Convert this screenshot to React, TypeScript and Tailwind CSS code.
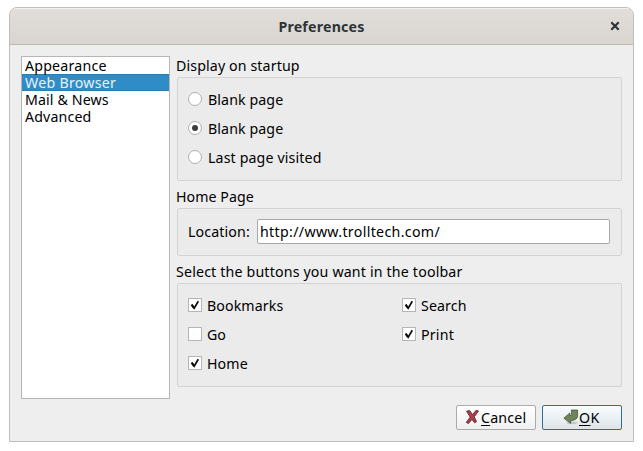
import type { ReactNode } from "react";

function Radio({ label, tracking, checked }: { label: string; tracking: string; checked?: boolean }) {
  return (
    <label className="flex h-[14px] items-center gap-[6px]">
      <span className="flex size-[14px] shrink-0 items-center justify-center rounded-full border border-[#b0b0b0] bg-white">
        {checked && <span className="size-[6px] rounded-full bg-[#3c3c3c]" />}
      </span>
      <span className={`whitespace-nowrap pt-[2px] ${tracking}`}>{label}</span>
    </label>
  );
}

function Check({ label, tracking, checked }: { label: string; tracking: string; checked?: boolean }) {
  return (
    <label className="flex h-[14px] items-center gap-[5px]">
      <span className="size-[14px] shrink-0 border border-[#b6b6b6] bg-white">
        {checked && (
          <svg viewBox="0 0 12 12" className="size-3" fill="none" stroke="#0a0a0a">
            <path d="M2.7 5.8 5.2 9.2 9.3 2.3" strokeWidth="1.7" />
            <path d="M2.6 5.7 5 9" strokeWidth="2.1" />
          </svg>
        )}
      </span>
      <span className={`whitespace-nowrap pt-[2px] ${tracking}`}>{label}</span>
    </label>
  );
}

function Group({ title, tracking, className, children }: { title: string; tracking: string; className: string; children: ReactNode }) {
  return (
    <section>
      <h2 className={`-ml-px h-[21px] whitespace-nowrap leading-[19px] ${tracking}`}>{title}</h2>
      <div className={`rounded-[2px] border border-[#d3d3d3] bg-[#ebebeb] ${className}`}>{children}</div>
    </section>
  );
}

export default function App() {
  return (
    <div className="h-[451px] w-[643px] bg-white pl-[9px] pt-[7px] font-['Noto_Sans',sans-serif] text-[14.2px] text-black">
      <div className="flex h-[435px] w-[625px] flex-col overflow-hidden rounded-t-[8px] border border-[#bdbdbd] bg-[#eeeeee]">
        <header className="grid h-[37px] shrink-0 grid-cols-[1fr_auto_1fr] items-center border-b border-[#bdb9ae] bg-linear-to-b from-[#e1dedb] to-[#d9d6d0] text-[#2e3436] shadow-[inset_0_1px_0_#f3f2f1]">
          <span />
          <h1 className="pt-px font-bold tracking-[0.2px]">Preferences</h1>
          <svg viewBox="0 0 10 10" className="mr-[13px] size-[10px] justify-self-end" stroke="#2e3436" strokeWidth="2.2">
            <path d="M1.3 1.3 8.7 8.7M8.7 1.3 1.3 8.7" />
          </svg>
        </header>
        <div className="flex gap-[7px] pl-[11px] pt-[11px]">
          <ul className="h-[343px] w-[149px] border border-[#b6b6b6] bg-white leading-[17px]">
            <li className="h-[17px] pl-[3px] tracking-[0.2px]">Appearance</li>
            <li className="h-[17px] bg-[#308cc6] pl-[3px] tracking-[0.27px] text-[#e6f2fa] shadow-[inset_0_1px_0_#2a7db1,inset_0_-1px_0_#2a7db1]">Web Browser</li>
            <li className="h-[17px] pl-[3px] tracking-[0.12px]">Mail &amp; News</li>
            <li className="h-[17px] pl-[3px] tracking-[0.15px]">Advanced</li>
          </ul>
          <div className="flex w-[445px] flex-col gap-[6px]">
            <Group title="Display on startup" tracking="tracking-[0.12px]" className="flex h-[104px] flex-col gap-[15px] pl-[10px] pt-[14px]">
              <Radio label="Blank page" tracking="tracking-[0.1px]" />
              <Radio label="Blank page" tracking="tracking-[0.1px]" checked />
              <Radio label="Last page visited" tracking="tracking-[0.13px]" />
            </Group>
            <Group title="Home Page" tracking="tracking-[0.05px]" className="flex h-[48px] items-start pl-[10px] pr-[11px] pt-[10px]">
              <label className="w-[69px] shrink-0 whitespace-nowrap leading-[25px] tracking-[0.12px]">Location:</label>
              <div className="h-[25px] grow rounded-[2px] border border-[#a8a8a8] bg-white pl-[2px] leading-[23px] tracking-[0.33px]">http://www.trolltech.com/</div>
            </Group>
            <Group title="Select the buttons you want in the toolbar" tracking="tracking-[0.17px]" className="grid h-[104px] grid-cols-[214px_1fr] content-start gap-y-[15px] pl-[10px] pt-[14px]">
              <Check label="Bookmarks" tracking="tracking-[0.1px]" checked />
              <Check label="Search" tracking="tracking-[0.1px]" checked />
              <Check label="Go" tracking="" />
              <Check label="Print" tracking="tracking-[0.2px]" checked />
              <Check label="Home" tracking="tracking-[0.1px]" checked />
            </Group>
          </div>
        </div>
        <footer className="flex justify-end gap-[6px] pr-[11px] pt-[6px]">
          <button className="flex h-[25px] w-[80px] items-center rounded-[2px] border border-[#ababab] bg-linear-to-b from-white to-[#f0f0f0] pl-[8px]">
            <svg viewBox="0 0 16 16" className="-mt-[2px] size-4 shrink-0" stroke="#4a3033" strokeWidth="0.9" strokeLinejoin="round">
              <path d="M1.6 2.2 4.6 1.5 7.5 5.6 11.1 1.3 13.5 2 9.2 7.9 11.6 12.6 9.6 13.8 6.9 10.4 3.4 14.6 1.3 13.4 5.2 8.1Z" fill="#b83a48" />
            </svg>
            <span className="tracking-[0.2px]"><u className="underline decoration-1 underline-offset-2">C</u>ancel</span>
          </button>
          <button className="flex h-[25px] w-[80px] items-center rounded-[2px] border border-[#2a7099] bg-linear-to-b from-[#fafcfd] to-[#dde5ea] pl-[20px]">
            <svg viewBox="0 0 16 16" className="-mt-[2px] size-4 shrink-0" stroke="#4a5640" strokeWidth="0.8" strokeLinejoin="round">
              <ellipse cx="9" cy="13.8" rx="5.5" ry="1.4" fill="#c3cacc" stroke="none" />
              <path d="M8.4 1H14.6V7.4Q14.4 10.6 7.6 11.8V14.4L.9 9.2 6.8 4V6.7Q8.4 6.6 8.4 5.6Z" fill="#708359" />
            </svg>
            <span className="tracking-[0.4px]"><u className="underline decoration-1 underline-offset-2">O</u>K</span>
          </button>
        </footer>
      </div>
    </div>
  );
}
